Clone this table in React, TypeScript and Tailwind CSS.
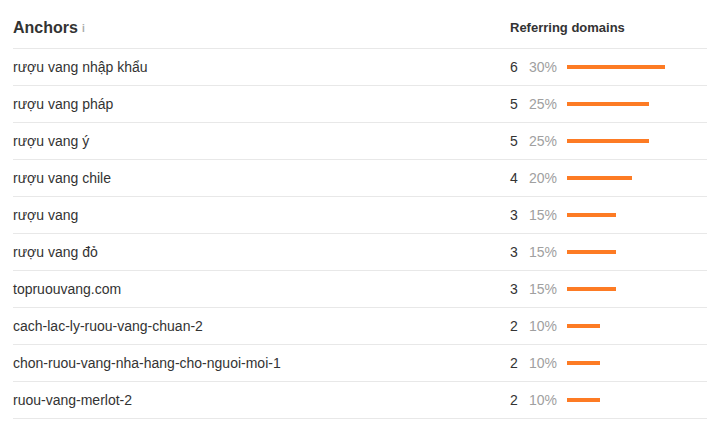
import React from "react";

const rows: { anchor: string; count: number; pct: number }[] = [
  { anchor: "rượu vang nhập khẩu", count: 6, pct: 30 },
  { anchor: "rượu vang pháp", count: 5, pct: 25 },
  { anchor: "rượu vang ý", count: 5, pct: 25 },
  { anchor: "rượu vang chile", count: 4, pct: 20 },
  { anchor: "rượu vang", count: 3, pct: 15 },
  { anchor: "rượu vang đỏ", count: 3, pct: 15 },
  { anchor: "topruouvang.com", count: 3, pct: 15 },
  { anchor: "cach-lac-ly-ruou-vang-chuan-2", count: 2, pct: 10 },
  { anchor: "chon-ruou-vang-nha-hang-cho-nguoi-moi-1", count: 2, pct: 10 },
  { anchor: "ruou-vang-merlot-2", count: 2, pct: 10 },
];

export default function App() {
  return (
    <div
      className="w-[723px] h-[424px] bg-white text-[#333333]"
      style={{ fontFamily: '"Liberation Sans", Arial, sans-serif' }}
    >
      <div className="ml-[13px] w-[694px]">
        <div className="flex items-center h-[48px] pt-[8px]">
          <div className="w-[497px] flex items-center">
            <span className="text-[16px] leading-[20px] font-bold text-[#333333]">Anchors</span>
            <span className="ml-[4px] mt-[2px] text-[10px] leading-[10px] text-[#aaaaaa] font-bold">i</span>
          </div>
          <div className="text-[13px] leading-[16px] font-bold text-[#333333]">Referring domains</div>
        </div>
        {rows.map((r, i) => (
          <div
            key={i}
            className={`flex items-center h-[37px] border-t border-[#e8e8e8] ${i === rows.length - 1 ? "border-b h-[38px]" : ""}`}
          >
            <div className="w-[497px] text-[14px] leading-[16px]">{r.anchor}</div>
            <div className="w-[19px] text-[14px] leading-[16px]">{r.count}</div>
            <div className="w-[38px] text-[14px] leading-[16px] text-[#a0a0a0]">{r.pct}%</div>
            <div
              className="h-[4px] bg-[#fd7b24]"
              style={{ width: `${Math.round(r.pct * 3.27)}px` }}
            />
          </div>
        ))}
      </div>
    </div>
  );
}
